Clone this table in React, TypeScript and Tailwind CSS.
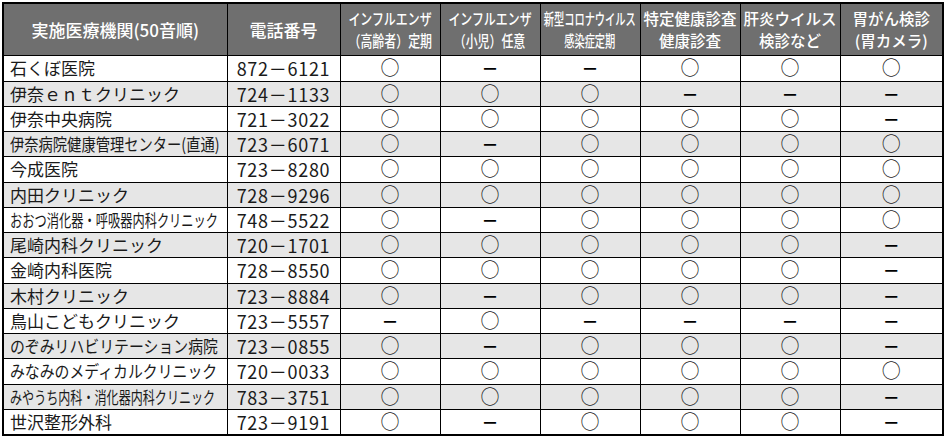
import React from "react";

type Mark = "o" | "-";

const rows: { name: string; tel: string; marks: Mark[]; squeeze?: string }[] = [
  { name: "石くぼ医院", tel: "872－6121", marks: ["o", "-", "-", "o", "o", "o"] },
  { name: "伊奈ｅｎｔクリニック", tel: "724－1133", marks: ["o", "o", "o", "-", "-", "-"] },
  { name: "伊奈中央病院", tel: "721－3022", marks: ["o", "o", "o", "o", "o", "-"] },
  { name: "伊奈病院健康管理センター(直通)", tel: "723－6071", marks: ["o", "-", "o", "o", "o", "o"], squeeze: "scale-x-[0.84]" },
  { name: "今成医院", tel: "723－8280", marks: ["o", "o", "o", "o", "o", "o"] },
  { name: "内田クリニック", tel: "728－9296", marks: ["o", "o", "o", "o", "o", "o"] },
  { name: "おおつ消化器・呼吸器内科クリニック", tel: "748－5522", marks: ["o", "-", "o", "o", "o", "o"], squeeze: "scale-x-[0.72]" },
  { name: "尾崎内科クリニック", tel: "720－1701", marks: ["o", "o", "o", "o", "o", "-"] },
  { name: "金崎内科医院", tel: "728－8550", marks: ["o", "o", "o", "o", "o", "-"] },
  { name: "木村クリニック", tel: "723－8884", marks: ["o", "-", "o", "o", "o", "-"] },
  { name: "鳥山こどもクリニック", tel: "723－5557", marks: ["-", "o", "-", "-", "-", "-"] },
  { name: "のぞみリハビリテーション病院", tel: "723－0855", marks: ["o", "-", "o", "o", "o", "-"], squeeze: "scale-x-[0.875]" },
  { name: "みなみのメディカルクリニック", tel: "720－0033", marks: ["o", "o", "o", "o", "o", "o"], squeeze: "scale-x-[0.875]" },
  { name: "みやうち内科・消化器内科クリニック", tel: "783－3751", marks: ["o", "o", "o", "o", "o", "-"], squeeze: "scale-x-[0.71]" },
  { name: "世沢整形外科", tel: "723－9191", marks: ["o", "-", "o", "o", "o", "-"] },
];

const heads: { l1: string; l2: string; squeeze?: string }[] = [
  { l1: "インフルエンザ", l2: "（高齢者）定期", squeeze: "scale-x-[0.77]" },
  { l1: "インフルエンザ", l2: "（小児）任意", squeeze: "scale-x-[0.77]" },
  { l1: "新型コロナウイルス", l2: "感染症定期", squeeze: "scale-x-[0.66]" },
  { l1: "特定健康診査", l2: "健康診査" },
  { l1: "肝炎ウイルス", l2: "検診など" },
  { l1: "胃がん検診", l2: "(胃カメラ)" },
];

function Cell({ m }: { m: Mark }) {
  return (
    <td className="border border-black text-center">
      {m === "o" ? (
        <span className="text-[19px] leading-none text-[#222]">○</span>
      ) : (
        <span className="text-[17px] leading-none font-bold text-black">－</span>
      )}
    </td>
  );
}

export default function App() {
  return (
    <div className="p-[2px] bg-white" style={{ fontFamily: '"Noto Sans CJK JP", "Noto Sans", sans-serif' }}>
      <table className="w-[940px] table-fixed border-collapse border-2 border-black text-[#1a1a1a]">
        <colgroup>
          <col className="w-[224px]" />
          <col className="w-[113px]" />
          <col className="w-[100px]" />
          <col className="w-[100px]" />
          <col className="w-[100px]" />
          <col className="w-[100px]" />
          <col className="w-[100px]" />
          <col className="w-[103px]" />
        </colgroup>
        <thead>
          <tr className="h-[52px] bg-[#6f6f6f] text-white">
            <th className="border border-black text-[17px] font-medium">実施医療機関(50音順)</th>
            <th className="border border-black text-[17px] font-medium">電話番号</th>
            {heads.map((h, i) => (
              <th key={i} className="border border-black font-medium p-0">
                <div className="flex flex-col items-center text-[15.5px] leading-[22px] whitespace-nowrap">
                  <span className={`inline-block ${h.squeeze ?? ""}`}>{h.l1}</span>
                  <span className={`inline-block ${h.squeeze ?? ""}`}>{h.l2}</span>
                </div>
              </th>
            ))}
          </tr>
        </thead>
        <tbody>
          {rows.map((r, i) => (
            <tr key={i} className={`${i % 4 === 0 ? "h-[26px]" : "h-[25px]"} ${i % 2 === 1 ? "bg-[#e6e6e6]" : "bg-white"}`}>
              <td className="border border-black px-[6px] py-0 whitespace-nowrap overflow-visible">
                <span className={`inline-block text-[17px] leading-none origin-left ${r.squeeze ?? ""}`}>{r.name}</span>
              </td>
              <td className="border border-black text-center text-[18px] leading-none tracking-[0.04em]">{r.tel}</td>
              {r.marks.map((m, j) => (
                <Cell key={j} m={m} />
              ))}
            </tr>
          ))}
        </tbody>
      </table>
    </div>
  );
}
